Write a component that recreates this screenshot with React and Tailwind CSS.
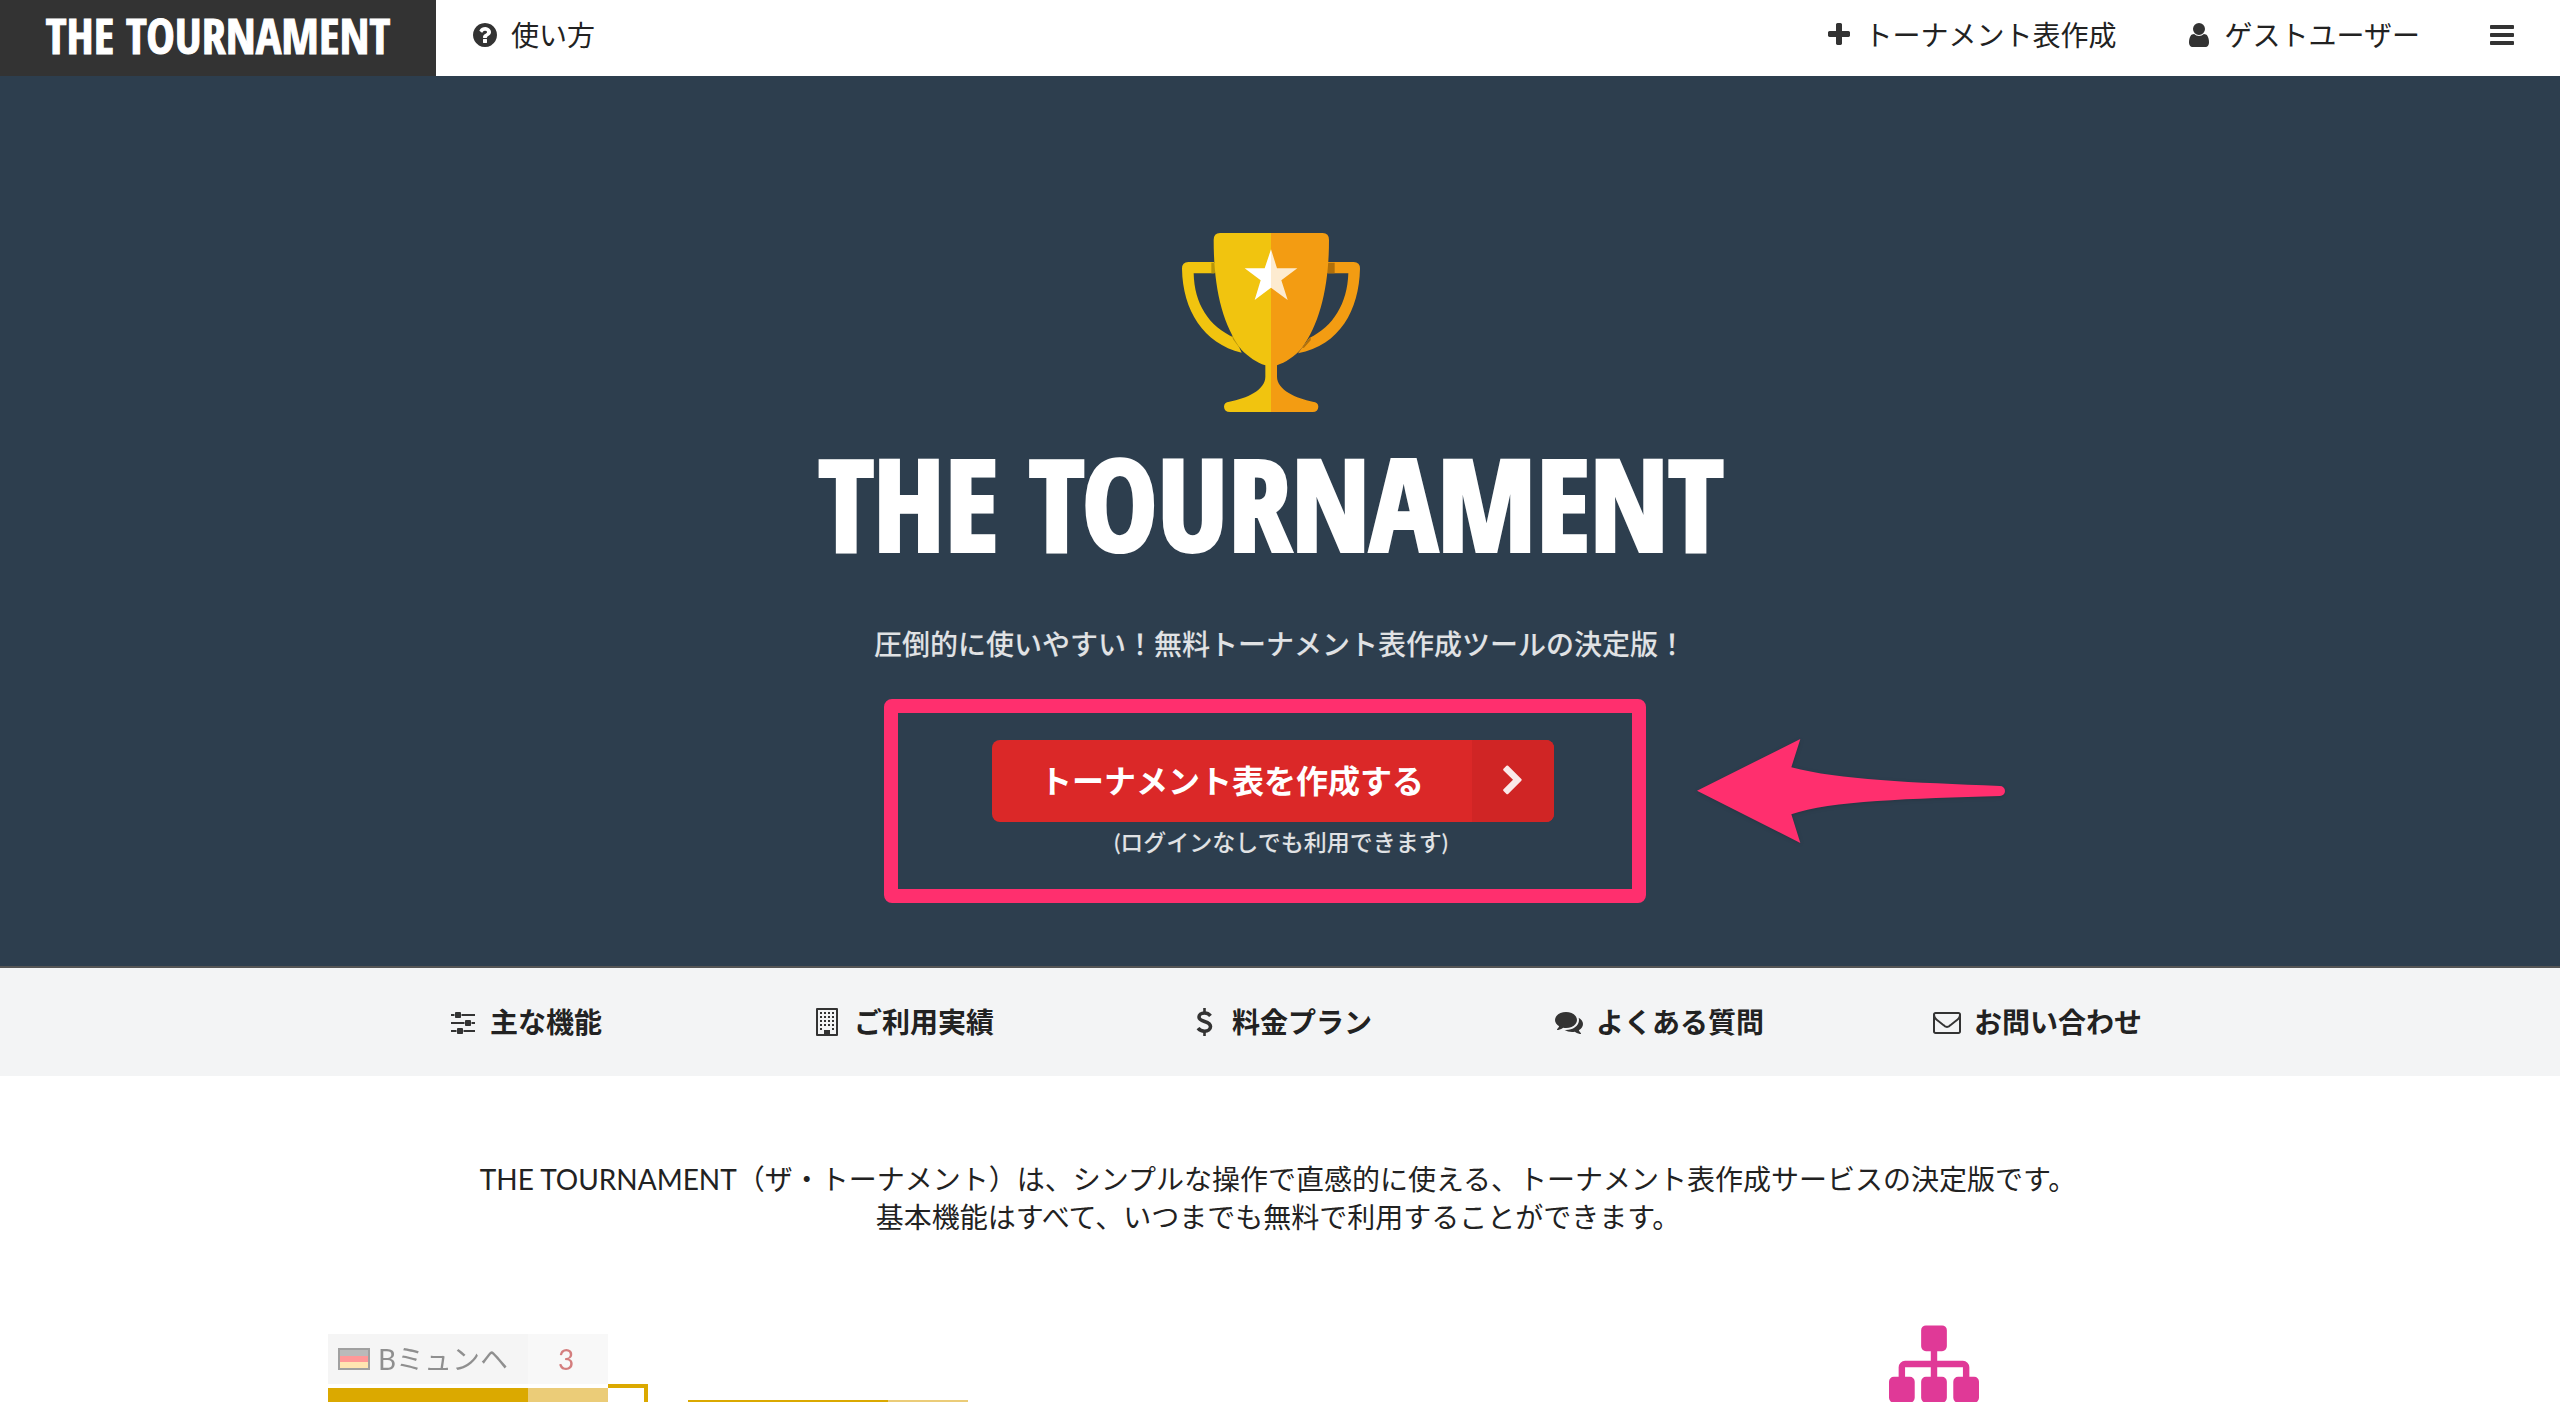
import React from 'react';

const paths = {
  help: 'M1024 1376v-192q0-14-9-23t-23-9h-192q-14 0-23 9t-9 23v192q0 14 9 23t23 9h192q14 0 23-9t9-23zm256-672q0-88-55.5-163t-138.5-116-170-41q-243 0-371 213-15 24 8 42l132 100q7 6 19 6 16 0 25-12 53-68 86-92 34-24 86-24 48 0 85.5 26t37.5 59q0 38-20 61t-68 45q-63 28-115.5 86.5t-52.5 125.5v36q0 14 9 23t23 9h192q14 0 23-9t9-23q0-19 21.5-49.5t54.5-49.5q32-18 49-28.5t46-35 44.5-48 28-60.5 12.5-81zm384 192q0 209-103 385.5t-279.5 279.5-385.5 103-385.5-103-279.5-279.5-103-385.5 103-385.5 279.5-279.5 385.5-103 385.5 103 279.5 279.5 103 385.5z',
  plus: 'M1600 736v192q0 40-28 68t-68 28h-416v416q0 40-28 68t-68 28h-192q-40 0-68-28t-28-68v-416h-416q-40 0-68-28t-28-68v-192q0-40 28-68t68-28h416v-416q0-40 28-68t68-28h192q40 0 68 28t28 68v416h416q40 0 68 28t28 68z',
  user: 'M1536 1399q0 109-62.5 187t-150.5 78h-854q-88 0-150.5-78t-62.5-187q0-85 8.5-160.5t31.5-152 58.5-131 94-89 134.5-34.5q131 128 313 128t313-128q76 0 134.5 34.5t94 89 58.5 131 31.5 152 8.5 160.5zm-256-887q0 159-112.5 271.5t-271.5 112.5-271.5-112.5-112.5-271.5 112.5-271.5 271.5-112.5 271.5 112.5 112.5 271.5z',
  bars: 'M1664 1344v128q0 26-19 45t-45 19h-1408q-26 0-45-19t-19-45v-128q0-26 19-45t45-19h1408q26 0 45 19t19 45zm0-512v128q0 26-19 45t-45 19h-1408q-26 0-45-19t-19-45v-128q0-26 19-45t45-19h1408q26 0 45 19t19 45zm0-512v128q0 26-19 45t-45 19h-1408q-26 0-45-19t-19-45v-128q0-26 19-45t45-19h1408q26 0 45 19t19 45z',
  sliders: 'M480 1408v128h-352v-128h352zm352-128q26 0 45 19t19 45v256q0 26-19 45t-45 19h-256q-26 0-45-19t-19-45v-256q0-26 19-45t45-19h256zm160-384v128h-864v-128h864zm-640-512v128h-224v-128h224zm1312 1024v128h-736v-128h736zm-960-1152q26 0 45 19t19 45v256q0 26-19 45t-45 19h-256q-26 0-45-19t-19-45v-256q0-26 19-45t45-19h256zm640 512q26 0 45 19t19 45v256q0 26-19 45t-45 19h-256q-26 0-45-19t-19-45v-256q0-26 19-45t45-19h256zm320 128v128h-224v-128h224zm0-512v128h-864v-128h864z',
  comments: 'M1408 768q0 139-94 257t-256.5 186.5-353.5 68.5q-86 0-176-16-124 88-278 128-36 9-86 16h-3q-11 0-20.5-8t-11.5-21q-1-3-1-6.5t.5-6.5 2-6l2.5-5 3.5-5.5 4-5 4.5-5 4-4.5q5-6 23-25t26-29.5 22.5-29 25-38.5 20.5-44q-124-72-195-177t-71-224q0-139 94-257t256.5-186.5 353.5-68.5 353.5 68.5 256.5 186.5 94 257zm384 256q0 120-71 224.5t-195 176.5q10 24 20.5 44t25 38.5 22.5 29 26 29.5 23 25q1 1 4 4.5t4.5 5 4 5 3.5 5.5l2.5 5 2 6 .5 6.5-1 6.5q-3 14-13 22t-22 7q-50-7-86-16-154-40-278-128-90 16-176 16-271 0-472-132 58 4 88 4 161 0 309-45t264-129q125-92 192-212t67-254q0-77-23-152 129 71 204 178t75 230z',
  mail: 'M1664 1504v-768q-32 36-69 66-268 206-426 338-51 43-83 67t-86.5 48.5-102.5 24.5h-2q-48 0-102.5-24.5t-86.5-48.5-83-67q-158-132-426-338-37-30-69-66v768q0 13 9.5 22.5t22.5 9.5h1472q13 0 22.5-9.5t9.5-22.5zm0-1051v-24.5l-.5-13-3-12.5-5.5-9-9-7.5-14-2.5h-1472q-13 0-22.5 9.5t-9.5 22.5q0 168 147 284 193 152 401 317 6 5 35 29.5t46 37.5 44.5 31.5 50.5 27.5 43 9h2q20 0 43-9t50.5-27.5 44.5-31.5 46-37.5 35-29.5q208-165 401-317 54-43 100.5-115.5t46.5-131.5zm128-37v1088q0 66-47 113t-113 47h-1472q-66 0-113-47t-47-113v-1088q0-66 47-113t113-47h1472q66 0 113 47t47 113z',
  chevron: 'M1363 877l-742 742q-19 19-45 19t-45-19l-166-166q-19-19-19-45t19-45l531-531-531-531q-19-19-19-45t19-45l166-166q19-19 45-19t45 19l742 742q19 19 19 45t-19 45z',
  sitemap: 'M1792 1248v320q0 40-28 68t-68 28h-320q-40 0-68-28t-28-68v-320q0-40 28-68t68-28h96v-192h-512v192h96q40 0 68 28t28 68v320q0 40-28 68t-68 28h-320q-40 0-68-28t-28-68v-320q0-40 28-68t68-28h96v-192h-512v192h96q40 0 68 28t28 68v320q0 40-28 68t-68 28h-320q-40 0-68-28t-28-68v-320q0-40 28-68t68-28h96v-192q0-52 38-90t90-38h512v-192h-96q-40 0-68-28t-28-68v-320q0-40 28-68t68-28h320q40 0 68 28t28 68v320q0 40-28 68t-68 28h-96v192h512q52 0 90 38t38 90v192h96q40 0 68 28t28 68z',
};

const Icon = ({ name, className = 'w-7 h-7 text-[#333]' }) => (
  <svg viewBox="0 0 1792 1792" fill="currentColor" className={className} aria-hidden="true">
    <path d={paths[name]} />
  </svg>
);

const BuildingIcon = () => (
  <svg viewBox="0 0 28 28" fill="currentColor" className="w-7 h-7" aria-hidden="true">
    <path fillRule="evenodd" d="M4 0h20q1 0 1 1v26q0 1-1 1H4q-1 0-1-1V1q0-1 1-1zM5 2v24h6v-3q0-1 1-1h4q1 0 1 1v3h6V2z" />
    {[4, 8, 12, 16, 20].map((y) =>
      [7, 11, 15, 19].map((x) => (y === 20 && (x === 11 || x === 15) ? null : <rect key={`${x}-${y}`} x={x} y={y} width="2" height="2" />))
    )}
    <rect x="11" y="22" width="6" height="5" />
  </svg>
);

const DollarIcon = () => (
  <svg viewBox="0 0 28 28" fill="none" stroke="currentColor" strokeWidth="3.6" className="w-7 h-7" aria-hidden="true">
    <path d="M19.500 7.800C18 6 16.500 5 13.500 5C10 5 8 6.800 8 9C8 14.500 19.500 12.500 19.500 18.500C19.500 21.300 17 23.200 13.500 23.200C10.500 23.200 8.500 22 7 20.100" />
    <path strokeWidth="2.6" d="M13.500 0V5M13.500 23V28" />
  </svg>
);

const Trophy = () => (
  <svg viewBox="126 69 534 537" className="w-[178px] h-[179px]" role="img" aria-label="Trophy">
    <path fill="#f1c40f" d="M222 156H145Q126 156 126 176C128 300 190 400 305 428L285 384C205 350 163 280 161 190H222Z" />
    <path fill="#f39c12" d="M564 156H641Q660 156 660 176C657 300 600 405 474 430L508 384C580 350 622 280 625 190H564Z" />
    <path fill="#b8960a" d="M214 158h12v32h-12zM275 374l30 40-8-2-18-24z" />
    <path fill="#b06f0a" d="M560 158h24v32h-24zM512 380l-26 34 6-1 20-22z" />
    <path fill="#f1c40f" d="M393 69H240Q221 69 221 90C221 230 245 340 305 420C325 440 350 458 376 466V500C376 540 320 565 268 575Q252 577 252 590Q253 606 270 606H393Z" />
    <path fill="#f39c12" d="M393 69H548Q567 69 567 90C567 230 540 340 485 415C465 440 435 458 411 466V500C411 540 470 565 518 575Q535 577 535 590Q534 606 518 606H393Z" />
    <path fill="#ffffff" d="M393 118L374 175H314L362 211L344 270L393 233Z" />
    <path fill="#fdebd0" d="M393 118L411 175H472L424 211L443 270L393 233Z" />
  </svg>
);

const Flag = ({ label, border, colors }) => (
  <svg viewBox="0 0 32 22" className="w-8 h-[22px] shrink-0" role="img" aria-label={label}>
    <rect width="32" height="22" fill={border} />
    <rect x="2" y="2" width="28" height="6" fill={colors[0]} />
    <rect x="2" y="8" width="28" height="6" fill={colors[1]} />
    <rect x="2" y="14" width="28" height="6" fill={colors[2]} />
  </svg>
);

const links = [
  { label: '主な機能', icon: <Icon name="sliders" /> },
  { label: 'ご利用実績', icon: <BuildingIcon /> },
  { label: '料金プラン', icon: <DollarIcon /> },
  { label: 'よくある質問', icon: <Icon name="comments" /> },
  { label: 'お問い合わせ', icon: <Icon name="mail" /> },
];

const App = () => {
  return (
    <div className="h-screen overflow-hidden bg-white text-[#222] text-[28px] leading-[38px] font-['Lato','Noto_Sans_CJK_JP',sans-serif]">
      {/* Header */}
      <header className="flex h-[76px] bg-white">
        <a href="#" className="w-[436px] bg-[#333] text-white flex items-center justify-center pb-1 font-['Open_Sans_Condensed','Open_Sans',sans-serif] font-bold text-[48px] leading-none whitespace-nowrap [-webkit-text-stroke:1px_white]">
          THE TOURNAMENT
        </a>
        <nav className="flex-1 flex items-center pb-1.5 pl-[35px] pr-11">
          <a href="#" className="flex items-center gap-3">
            <Icon name="help" />
            使い方
          </a>
          <a href="#" className="flex items-center gap-3 ml-auto">
            <Icon name="plus" />
            トーナメント表作成
          </a>
          <a href="#" className="flex items-center gap-3 ml-17">
            <Icon name="user" />
            ゲストユーザー
          </a>
          <button type="button" aria-label="メニュー" className="ml-17">
            <Icon name="bars" />
          </button>
        </nav>
      </header>

      {/* Hero */}
      <section className="bg-[#2d3e4e] border-b-2 border-[#555] h-[892px] pt-[157px] flex flex-col items-center">
        <div className="flex flex-col items-center pr-4.5">
          <Trophy />
          <h1 className="mt-9 text-white font-['Open_Sans_Condensed','Open_Sans',sans-serif] font-bold text-[126px] leading-[108px] whitespace-nowrap [-webkit-text-stroke:4px_white]">
            THE TOURNAMENT
          </h1>
        </div>
        <p className="mt-[69px] font-medium text-white/85">圧倒的に使いやすい！無料トーナメント表作成ツールの決定版！</p>
        <div className="pr-3.5 mt-[77px]">
          <div className="relative flex flex-col items-center">
            <button type="button" className="flex h-[82px] rounded-lg overflow-hidden bg-[#db2828] text-white text-[32px] font-bold">
              <span className="self-center px-12">トーナメント表を作成する</span>
              <span className="w-[82px] self-stretch flex items-center justify-center bg-[#d02525] text-white/90">
                <Icon name="chevron" className="w-8 h-8" />
              </span>
            </button>
            <p className="mt-1 pl-4 text-[23px] leading-8 font-medium text-white/85">(ログインなしでも利用できます)</p>
            {/* Highlight frame and pointer */}
            <div className="absolute -left-27 -right-23 -top-[41px] -bottom-[45px] border-[14px] border-[#ff2f6e] rounded-lg pointer-events-none" />
            <svg viewBox="50 54 930 324" className="absolute left-[704px] -top-0.5 w-[310px] h-[108px] drop-shadow" aria-hidden="true">
              <path fill="#ff2f6e" d="M53 212L363 57L336 142C480 180 700 188 962 198A15 15 0 0 1 962 228C700 236 450 242 336 283L363 369Z" />
            </svg>
          </div>
        </div>
      </section>

      {/* Section links */}
      <nav className="bg-[#f3f4f5] h-[108px] flex items-center justify-center">
        <div className="w-full max-w-[1890px] grid grid-cols-5">
          {links.map((link) => (
            <a key={link.label} href="#" className="flex items-center justify-center gap-2.5 font-bold">
              <span className="w-[34px] flex justify-center text-[#333]">{link.icon}</span>
              {link.label}
            </a>
          ))}
        </div>
      </nav>

      <main>
        <p className="mt-[84px] pr-1 text-center">
          THE TOURNAMENT（ザ・トーナメント）は、シンプルな操作で直感的に使える、トーナメント表作成サービスの決定版です。
          <br />
          基本機能はすべて、いつまでも無料で利用することができます。
        </p>

        <div className="mt-[83px] mx-auto w-full max-w-[1904px] flex">
          {/* Bracket */}
          <div className="flex-1 flex items-start pt-[15px]">
            <div className="w-[280px]">
              <div className="flex h-[50px] items-center opacity-50">
                <div className="w-[200px] h-full bg-[#ececec] flex items-center gap-2 pl-2.5 whitespace-nowrap">
                  <Flag label="Germany" border="#444" colors={['#777', '#f33', '#fc6']} />
                  Bミュンヘ
                </div>
                <div className="w-20 h-full bg-[#f3f3f3] flex items-center justify-center pr-1 text-[#a00]">3</div>
              </div>
              <div className="mt-1 flex h-[50px]">
                <div className="w-[200px] bg-[#dba900] flex items-center gap-2 pl-2.5 whitespace-nowrap">
                  <Flag label="Spain" border="#a33" colors={['#d22', '#fc0', '#d22']} />
                  Rマドリー
                </div>
                <div className="w-20 bg-[#ebcc78]" />
              </div>
            </div>
            <div className="mt-[50px] w-10 h-[60px] border-t-4 border-r-4 border-[#dba900]" />
            <div className="mt-[66px] ml-10 w-[280px] flex h-[50px]">
              <div className="w-[200px] bg-[#dba900]" />
              <div className="w-20 bg-[#ebcc78]" />
            </div>
          </div>
          {/* Feature */}
          <div className="w-[596px] flex justify-center">
            <Icon name="sitemap" className="w-[90px] h-[90px] text-[#e03997]" />
          </div>
        </div>
      </main>
    </div>
  );
};

export default App;
